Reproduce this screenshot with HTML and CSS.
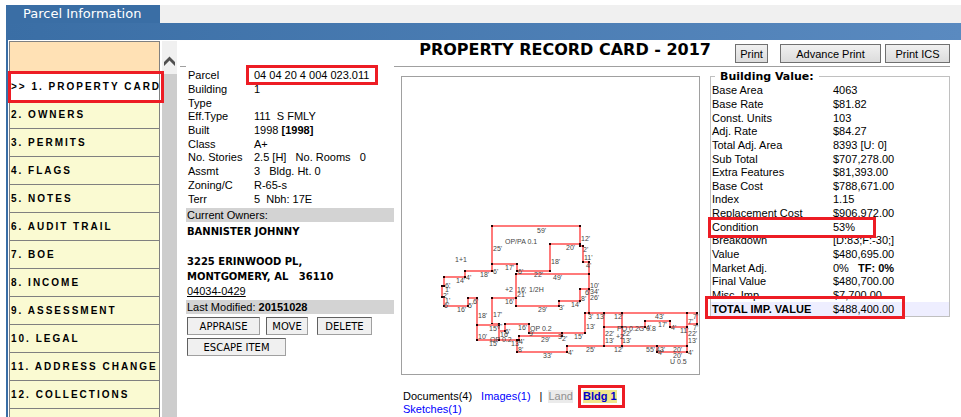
FILE: index.html
```html
<!DOCTYPE html>
<html lang="en">
<head>
    <meta charset="UTF-8">
    <meta name="viewport" content="width=device-width, initial-scale=1.0">
    <title>Parcel Information</title>
    <link rel="stylesheet" href="styles.css">
</head>
<body>
    <div class="app">
        <div class="tabs">
            <div class="tab">Parcel Information</div>
        </div>
        <div class="bar"></div>
        <div class="main">
            <nav class="menu">
                <div class="menu-top"></div>
                <a href="#" class="active marked">&gt;&gt; 1. PROPERTY CARD</a>
                <a href="#">2. OWNERS</a>
                <a href="#">3. PERMITS</a>
                <a href="#">4. FLAGS</a>
                <a href="#">5. NOTES</a>
                <a href="#">6. AUDIT TRAIL</a>
                <a href="#">7. BOE</a>
                <a href="#">8. INCOME</a>
                <a href="#">9. ASSESSMENT</a>
                <a href="#">10. LEGAL</a>
                <a href="#">11. ADDRESS CHANGE</a>
                <a href="#">12. COLLECTIONS</a>
            </nav>
            <div class="scrollbar">
                <svg class="arrow" viewBox="0 0 15 33" width="15" height="33">
                    <path d="M2 21V25L7.500 19.500L13 25V21L7.500 15.500Z" fill="#505050"/>
                </svg>
                <div class="thumb"></div>
            </div>
            <div class="content">
                <header class="card-header">
                    <h1>PROPERTY RECORD CARD - 2017</h1>
                    <button class="print">Print</button>
                    <button class="print advance">Advance Print</button>
                    <button class="print ics">Print ICS</button>
                </header>
                <div class="columns">
                    <section class="info">
                        <table class="info-table">
                            <tr><th>Parcel</th><td><span class="marked parcel">04 04 20 4 004 023.011</span></td></tr>
                            <tr><th>Building</th><td>1</td></tr>
                            <tr><th>Type</th><td></td></tr>
                            <tr><th>Eff.Type</th><td>111&nbsp; S FMLY</td></tr>
                            <tr><th>Built</th><td>1998 <b>[1998]</b></td></tr>
                            <tr><th>Class</th><td>A+</td></tr>
                            <tr><th>No. Stories</th><td>2.5 [H] &nbsp; No. Rooms &nbsp; 0</td></tr>
                            <tr><th>Assmt</th><td>3 &nbsp; Bldg. Ht. 0</td></tr>
                            <tr><th>Zoning/C</th><td>R-65-s</td></tr>
                            <tr><th>Terr</th><td>5 &nbsp;Nbh: 17E</td></tr>
                        </table>
                        <div class="strip">Current Owners:</div>
                        <div class="owner">
                            BANNISTER JOHNNY<br><br>
                            3225 ERINWOOD PL,<br>
                            MONTGOMERY, AL &nbsp; 36110
                        </div>
                        <a href="#" class="owner-link">04034-0429</a>
                        <div class="strip">Last Modified: <b>20151028</b></div>
                        <div class="actions">
                            <button class="appraise">APPRAISE</button>
                            <button class="move">MOVE</button>
                            <button class="delete">DELETE</button>
                            <button class="escape">ESCAPE ITEM</button>
                        </div>
                    </section>
                    <section class="sketch">
                        <div class="frame">
                            <svg viewBox="402 77 297 297" width="297" height="297">
                                <defs>
                                    <marker id="dot" markerUnits="userSpaceOnUse" markerWidth="2" markerHeight="2" refX="1" refY="1">
                                        <rect width="2" height="2" fill="#200"/>
                                    </marker>
                                </defs>
                                <g class="walls">
                                    <path d="M492 264V226H580V246H583V262H589V313"/>
                                    <path d="M580 244H550V271H517V264H492V271H465V277H444V286H442V297H444V306H468V298H477V325V340H499H517V352H567V346H604H622H657H687"/>
                                    <path d="M516 298V274H589V289H580V301H559V306H516V298H492V324H499V331H505V324H529V333H562H585V313"/>
                                    <path d="M477 325H499V340"/>
                                    <path d="M517 340H519V336H562V333"/>
                                    <path d="M585 313H589H604H622H687H697V324H687"/>
                                    <path d="M604 313V327V346"/>
                                    <path d="M622 313V327V346"/>
                                    <path d="M604 327H622H645V321H670V327H687"/>
                                    <path d="M687 313V327V346V352H657V346"/>
                                </g>
                                <g class="dims">
                                    <text x="537" y="233">59'</text>
                                    <text x="505" y="244">OP/PA 0.1</text>
                                    <text x="493" y="251">25'</text>
                                    <text x="455" y="262">1+1</text>
                                    <text x="505" y="270">17'</text>
                                    <text x="493" y="274">6'</text>
                                    <text x="518" y="274">6'</text>
                                    <text x="534" y="277">22'</text>
                                    <text x="480" y="277">18'</text>
                                    <text x="466" y="280">4'</text>
                                    <text x="456" y="283">14'</text>
                                    <text x="445" y="288">6'</text>
                                    <text x="445" y="292">1'</text>
                                    <text x="443" y="298">2'</text>
                                    <text x="445" y="303">1'</text>
                                    <text x="444" y="308">6'</text>
                                    <text x="457" y="312">16'</text>
                                    <text x="468" y="308">5'</text>
                                    <text x="473" y="304">6'</text>
                                    <text x="478" y="318">18'</text>
                                    <text x="493" y="317">17'</text>
                                    <text x="478" y="339">10'</text>
                                    <text x="505" y="292">+2</text>
                                    <text x="517" y="292">16'</text>
                                    <text x="517" y="297">21'</text>
                                    <text x="529" y="292">1/2H</text>
                                    <text x="505" y="304">16'</text>
                                    <text x="538" y="312">29'</text>
                                    <text x="489" y="331">15'</text>
                                    <text x="497" y="329">7'</text>
                                    <text x="500" y="337">16'</text>
                                    <text x="505" y="334">6'</text>
                                    <text x="490" y="342">OP 0.2</text>
                                    <text x="489" y="346">15'</text>
                                    <text x="511" y="346">13'</text>
                                    <text x="519" y="344">4'</text>
                                    <text x="518" y="352">8'</text>
                                    <text x="518" y="330">16'</text>
                                    <text x="530" y="331">OP 0.2</text>
                                    <text x="529" y="336">9'</text>
                                    <text x="541" y="342">29'</text>
                                    <text x="543" y="358">33'</text>
                                    <text x="581" y="241">12'</text>
                                    <text x="583" y="252">2'</text>
                                    <text x="566" y="250">20'</text>
                                    <text x="551" y="264">18'</text>
                                    <text x="584" y="260">11'</text>
                                    <text x="586" y="268">4'</text>
                                    <text x="553" y="280">49'</text>
                                    <text x="590" y="288">10'</text>
                                    <text x="585" y="295">6'</text>
                                    <text x="590" y="294">34'</text>
                                    <text x="590" y="300">26'</text>
                                    <text x="581" y="301">8'</text>
                                    <text x="571" y="307">14'</text>
                                    <text x="559" y="310">3'</text>
                                    <text x="588" y="319">3'</text>
                                    <text x="596" y="319">13'</text>
                                    <text x="614" y="319">12'</text>
                                    <text x="655" y="319">43'</text>
                                    <text x="693" y="319">7'</text>
                                    <text x="586" y="329">13'</text>
                                    <text x="605" y="336">22'</text>
                                    <text x="605" y="343">13'</text>
                                    <text x="617" y="331">PO 0.2G 0.8</text>
                                    <text x="622" y="336">22'</text>
                                    <text x="616" y="339">+2</text>
                                    <text x="622" y="343">13'</text>
                                    <text x="646" y="330">4'</text>
                                    <text x="658" y="327">17'</text>
                                    <text x="671" y="330">4'</text>
                                    <text x="680" y="333">11'</text>
                                    <text x="688" y="324">7'</text>
                                    <text x="693" y="330">7'</text>
                                    <text x="688" y="336">22'</text>
                                    <text x="688" y="343">13'</text>
                                    <text x="558" y="339">3'</text>
                                    <text x="562" y="341">2'</text>
                                    <text x="574" y="339">15'</text>
                                    <text x="586" y="352">25'</text>
                                    <text x="568" y="355">4'</text>
                                    <text x="614" y="352">12'</text>
                                    <text x="646" y="352">55'</text>
                                    <text x="656" y="352">43'</text>
                                    <text x="658" y="355">4'</text>
                                    <text x="673" y="352">20'</text>
                                    <text x="673" y="358">20'</text>
                                    <text x="688" y="355">4'</text>
                                    <text x="670" y="364">U 0.5</text>
                                </g>
                            </svg>
                        </div>
                        <div class="links">
                            <a href="#" class="docs">Documents(4)</a>
                            <a href="#">Images(1)</a>
                            <span class="sep">|</span>
                            <span class="land">Land</span>
                            <a href="#" class="marked bldg">Bldg 1</a>
                        </div>
                        <div class="links"><a href="#">Sketches(1)</a></div>
                    </section>
                    <fieldset class="value">
                        <legend>Building Value:</legend>
                        <table class="value-table">
                            <tr><th>Base Area</th><td>4063</td></tr>
                            <tr><th>Base Rate</th><td>$81.82</td></tr>
                            <tr><th>Const. Units</th><td>103</td></tr>
                            <tr><th>Adj. Rate</th><td>$84.27</td></tr>
                            <tr><th>Total Adj. Area</th><td>8393 [U: 0]</td></tr>
                            <tr><th>Sub Total</th><td>$707,278.00</td></tr>
                            <tr><th>Extra Features</th><td>$81,393.00</td></tr>
                            <tr><th>Base Cost</th><td>$788,671.00</td></tr>
                            <tr><th>Index</th><td>1.15</td></tr>
                            <tr><th>Replacement Cost</th><td>$906,972.00</td></tr>
                            <tr class="marked condition"><th>Condition</th><td>53%</td></tr>
                            <tr><th>Breakdown</th><td>[D:83;F:-30;]</td></tr>
                            <tr><th>Value</th><td>$480,695.00</td></tr>
                            <tr><th>Market Adj.</th><td>0% &nbsp; <b>TF: 0%</b></td></tr>
                            <tr><th>Final Value</th><td>$480,700.00</td></tr>
                            <tr><th>Misc. Imp.</th><td>$7,700.00</td></tr>
                            <tr class="marked total"><th>TOTAL IMP. VALUE</th><td>$488,400.00</td></tr>
                        </table>
                    </fieldset>
                </div>
            </div>
        </div>
    </div>
</body>
</html>
```

FILE: styles.css
```css
* {
    box-sizing: border-box;
}
body {
    margin: 0;
    background-color: #fff;
    color: #000;
    font-family: Arial, "Liberation Sans", sans-serif;
    font-size: 11px;
    line-height: 13px;
}
.app {
    display: flex;
    flex-direction: column;
    height: 100vh;
    padding: 5px 0 0 6px;
    overflow: hidden;
}
.tabs {
    display: flex;
    flex: none;
    background-color: #f0f0f0;
}
.tab {
    padding: 0 19px 0 17px;
    background-color: #3a6ea5;
    color: #fff;
    font-family: Verdana, "DejaVu Sans", sans-serif;
    font-size: 13px;
    line-height: 18px;
}
.bar {
    flex: none;
    height: 17px;
    background: linear-gradient(to right, #3a6ea5, #5a8ac0);
}
.main {
    display: flex;
    flex: 1;
    min-height: 0;
    padding: 1px 0 0 1px;
    border-left: 2px solid #3a6ea5;
}

/* left menu */
.menu {
    flex: none;
    width: 151px;
    border: 1px solid #808080;
    border-bottom: none;
    background-color: #fafad2;
}
.menu-top {
    height: 31px;
    border-bottom: 1px solid #808080;
    background-color: #ffe1b5;
}
.menu a {
    display: block;
    height: 28px;
    padding-left: 1px;
    border-bottom: 1px solid #808080;
    color: #000;
    font-size: 10px;
    font-weight: bold;
    letter-spacing: 2px;
    line-height: 27px;
    text-decoration: none;
    white-space: nowrap;
}
.menu a.active {
    background-color: #fff;
}
.scrollbar {
    flex: none;
    display: flex;
    flex-direction: column;
    width: 15px;
    margin-left: 2px;
    background-color: #f0f0f0;
}
.arrow {
    flex: none;
    display: block;
}
.thumb {
    flex: 1;
    background-color: #cdcdcd;
}

/* red highlight boxes */
.marked {
    position: relative;
}
.marked::after {
    content: "";
    position: absolute;
    border: 3px solid #ed1c24;
    z-index: 2;
}
.active::after {
    inset: -2px -5px -3px -2px;
}
.parcel::after {
    inset: -4px -9px -4px -8px;
}
.bldg::after {
    inset: -5px -8px -5px -5px;
}
.condition::after {
    inset: -3px 73px -4px -3px;
}
.total::after {
    inset: -6px 44px -3px -6px;
}

/* card */
.content {
    flex: 1;
    min-width: 0;
    padding: 0 11px 0 3px;
}
.card-header {
    display: flex;
    justify-content: flex-end;
    height: 26px;
    border-bottom: 1px solid #a0a0a0;
}
.card-header h1 {
    margin: 0 24px 0 0;
    font-family: Verdana, "DejaVu Sans", sans-serif;
    font-size: 16px;
    line-height: 18px;
    white-space: nowrap;
}
button {
    padding: 0;
    border: 1px solid #a0a0a0;
    background-color: #f0f0f0;
    color: #000;
}
.print {
    width: 33px;
    height: 19px;
    margin-top: 3px;
    border-color: #707070;
    background: linear-gradient(#f0f0f0, #dcdcdc);
    font-family: Arial, "Liberation Sans", sans-serif;
    font-size: 11px;
}
.advance {
    width: 101px;
    margin-left: 12px;
}
.ics {
    width: 65px;
    margin-left: 4px;
}
.columns {
    display: flex;
    align-items: flex-start;
}
.info {
    position: relative;
    flex: none;
    width: 208px;
    margin: -2px 0 0 6px;
    padding-top: 4px;
    background-color: #fff;
}
table {
    border-collapse: collapse;
}
th, td {
    padding: 0;
    font-weight: normal;
    text-align: left;
    white-space: nowrap;
}
.info-table {
    width: 206px;
    height: 137px;
    margin: 0 0 2px 2px;
}
.info-table th {
    width: 66px;
}
.strip {
    padding: 0 1px;
    background-color: #d3d3d3;
    line-height: 14px;
}
.owner {
    padding: 2px 1px 0;
    font-family: Verdana, "DejaVu Sans", sans-serif;
    font-size: 10px;
    font-weight: bold;
    line-height: 15px;
}
.owner-link {
    display: block;
    padding: 0 1px 1px;
    color: #000;
    line-height: 15px;
}
.actions {
    display: flex;
    flex-wrap: wrap;
    gap: 3px 0;
    padding: 3px 1px 0;
}
.actions button {
    height: 18px;
    border-color: #606060 #a0a0a0 #a0a0a0 #606060;
    font-family: Verdana, "DejaVu Sans", sans-serif;
    font-size: 10px;
}
.actions .appraise {
    width: 73px;
}
.actions .move {
    width: 42px;
    margin: 0 9px 0 6px;
}
.actions .delete {
    width: 55px;
}
.actions .escape {
    width: 99px;
}
.sketch {
    flex: none;
    width: 299px;
    margin: 9px 0 0 7px;
}
.frame {
    border: 1px solid #a0a0a0;
}
.frame svg {
    display: block;
}
.walls path {
    fill: none;
    stroke: #ff7a7a;
    stroke-width: 2;
    marker-start: url(#dot);
    marker-mid: url(#dot);
    marker-end: url(#dot);
}
.dims text {
    fill: #444;
    font-size: 7px;
}
.links {
    display: flex;
    padding-left: 2px;
}
.frame + .links {
    margin-top: 15px;
}
.links a {
    color: #00f;
    text-decoration: none;
}
.links .docs {
    margin-right: 9px;
    color: #000;
}
.links .sep {
    margin: 0 6px 0 9px;
}
.links .land {
    margin-right: 10px;
    background-color: #ebebeb;
    color: #909090;
}
.links .bldg {
    background-color: #f0e68c;
    color: #00c;
    font-weight: bold;
}
.value {
    flex: 1;
    min-width: 0;
    margin: 2px 0 0 10px;
    padding: 0;
    border: 1px solid #c0c0c0;
}
.value legend {
    margin-left: 4px;
    padding: 0 5px;
    font-family: Verdana, "DejaVu Sans", sans-serif;
    font-size: 11px;
    font-weight: bold;
    line-height: 15px;
}
.value-table {
    width: 100%;
    height: 232px;
}
.value-table th {
    width: 122px;
    padding-left: 1px;
}
.value-table .total {
    background-color: #eeeeff;
}
.value-table .total th {
    font-weight: bold;
}
```
